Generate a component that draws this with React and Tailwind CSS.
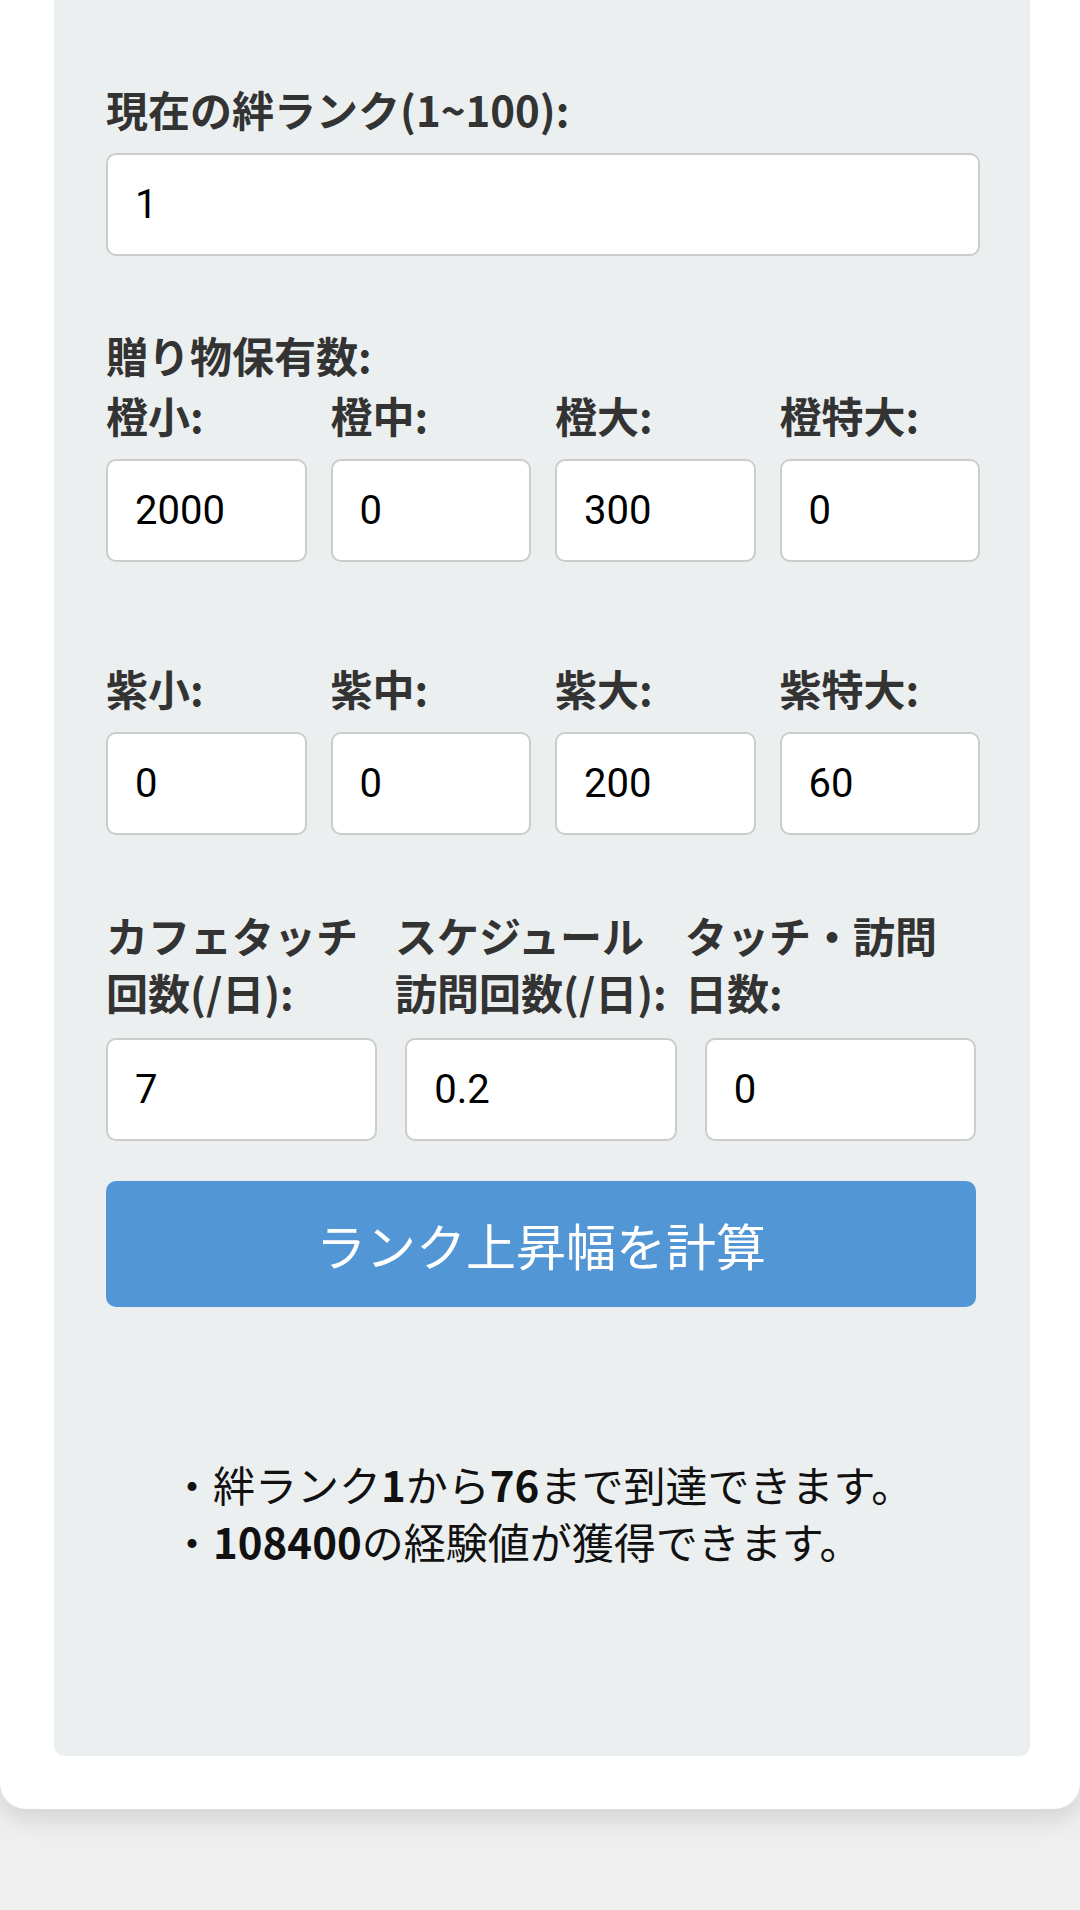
import React, { useState } from 'react';

const labelCls =
  "block text-[42px] leading-[57px] font-bold text-[#333333] [font-family:'Noto_Sans_CJK_JP',sans-serif]";
const inputCls =
  "block w-full h-[103px] bg-white border-2 border-[#cccccc] rounded-[10px] pl-[27px] pr-3 text-[40px] text-black outline-none [font-family:Roboto,'Noto_Sans_CJK_JP',sans-serif]";

function Field({ label, name, value, onChange }) {
  return (
    <div>
      <label className={`${labelCls} mb-[16px] whitespace-nowrap`}>{label}</label>
      <input
        name={name}
        type="text"
        inputMode="decimal"
        value={value}
        onChange={onChange}
        className={inputCls}
      />
    </div>
  );
}

export default function App() {
  // all the inputs in one object
  const [form, setForm] = useState({
    rank: '1',
    os: '2000', om: '0', ol: '300', oxl: '0',
    ps: '0', pm: '0', pl: '200', pxl: '60',
    cafe: '7', schedule: '0.2', days: '0',
  });

  const handleChange = (e) => {
    const { name, value } = e.target;
    setForm(prev => ({ ...prev, [name]: value }));
  };

  const orange = [
    ['橙小:', 'os'], ['橙中:', 'om'], ['橙大:', 'ol'], ['橙特大:', 'oxl'],
  ];
  const purple = [
    ['紫小:', 'ps'], ['紫中:', 'pm'], ['紫大:', 'pl'], ['紫特大:', 'pxl'],
  ];

  return (
    <div className="min-h-[1910px] bg-[#efefef]">
      {/* white card */}
      <div className="bg-white rounded-b-[26px] shadow-[0_10px_24px_rgba(0,0,0,0.12)] pl-[54px] pr-[50px] pb-[53px]">
        {/* gray form panel */}
        <div className="bg-[#eceff0] rounded-b-[10px] pl-[52px] pr-[50px] pt-[80px] pb-[187px]">
          {/* current rank */}
          <label className={`${labelCls} mb-[16px]`}>現在の絆ランク(1~100):</label>
          <input
            name="rank"
            type="text"
            inputMode="numeric"
            value={form.rank}
            onChange={handleChange}
            className={inputCls}
          />

          {/* gifts */}
          <div className={`${labelCls} mt-[70px] mb-[3px]`}>贈り物保有数:</div>
          <div className="grid grid-cols-4 gap-x-[24px]">
            {orange.map(([l, n]) => (
              <Field key={n} label={l} name={n} value={form[n]} onChange={handleChange} />
            ))}
          </div>

          <div className="grid grid-cols-4 gap-x-[24px] mt-[97px]">
            {purple.map(([l, n]) => (
              <Field key={n} label={l} name={n} value={form[n]} onChange={handleChange} />
            ))}
          </div>

          {/* daily counts: labels and inputs sit on slightly different columns */}
          <div className="grid grid-cols-[289px_290px_1fr] mt-[71px] pr-[4px]">
            <label className={labelCls}>カフェタッチ<br />回数(/日):</label>
            <label className={labelCls}>スケジュール<br />訪問回数(/日):</label>
            <label className={labelCls}>タッチ・訪問<br />日数:</label>
          </div>
          <div className="grid grid-cols-3 gap-x-[28px] mt-[18px] pr-[4px]">
            {['cafe', 'schedule', 'days'].map(n => (
              <input
                key={n}
                name={n}
                type="text"
                inputMode="decimal"
                value={form[n]}
                onChange={handleChange}
                className={inputCls}
              />
            ))}
          </div>

          <button
            type="button"
            className="mt-[40px] w-[870px] h-[126px] rounded-[10px] bg-[#5396d5] text-white text-[50px] [font-family:'Noto_Sans_CJK_JP',sans-serif]"
          >
            ランク上昇幅を計算
          </button>

          {/* result */}
          <div className="mt-[148px] pl-[65px] text-[42px] leading-[57px] text-[#111111] [font-family:'Noto_Sans_CJK_JP',sans-serif]">
            <p>・絆ランク<b>1</b>から<b>76</b>まで到達できます。</p>
            <p>・<b>108400</b>の経験値が獲得できます。</p>
          </div>
        </div>
      </div>
    </div>
  );
}
